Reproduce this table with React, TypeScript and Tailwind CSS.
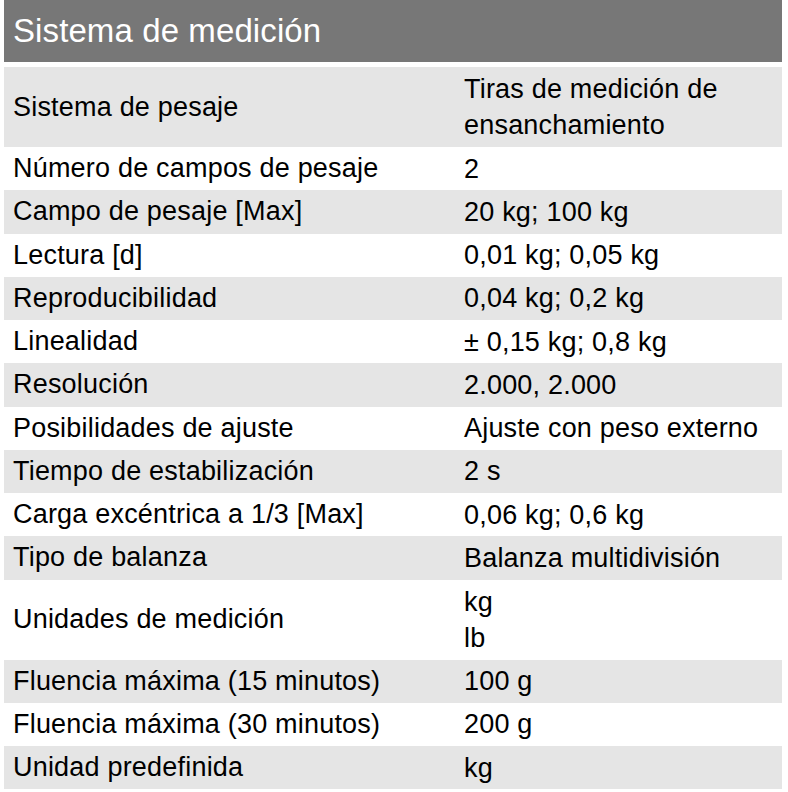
const rows: { label: string; value: string[]; tall?: boolean }[] = [
  { label: "Sistema de pesaje", value: ["Tiras de medición de", "ensanchamiento"], tall: true },
  { label: "Número de campos de pesaje", value: ["2"] },
  { label: "Campo de pesaje [Max]", value: ["20 kg; 100 kg"] },
  { label: "Lectura [d]", value: ["0,01 kg; 0,05 kg"] },
  { label: "Reproducibilidad", value: ["0,04 kg; 0,2 kg"] },
  { label: "Linealidad", value: ["± 0,15 kg; 0,8 kg"] },
  { label: "Resolución", value: ["2.000, 2.000"] },
  { label: "Posibilidades de ajuste", value: ["Ajuste con peso externo"] },
  { label: "Tiempo de estabilización", value: ["2 s"] },
  { label: "Carga excéntrica a 1/3 [Max]", value: ["0,06 kg; 0,6 kg"] },
  { label: "Tipo de balanza", value: ["Balanza multidivisión"] },
  { label: "Unidades de medición", value: ["kg", "lb"], tall: true },
  { label: "Fluencia máxima (15 minutos)", value: ["100 g"] },
  { label: "Fluencia máxima (30 minutos)", value: ["200 g"] },
  { label: "Unidad predefinida", value: ["kg"] },
]

export default function App() {
  return (
    <div
      className="w-[788px] h-[792px] bg-white overflow-hidden"
      style={{ fontFamily: '"Liberation Sans", Arial, sans-serif' }}
    >
      <div className="ml-[4px] mr-[6px] h-[62px] bg-[#777777] flex items-center pl-[9px]">
        <span className="text-white text-[33px] leading-none tracking-[0.1px] pb-[2px]">Sistema de medición</span>
      </div>

      <div className="ml-[4px] mr-[6px] mt-[5px] flex flex-col">
        {rows.map((r, i) => (
          <div
            key={r.label}
            className={
              "flex items-center text-black text-[27px] tracking-[0.2px] " +
              (r.tall ? "h-[80px] " : "h-[43.25px] ") +
              (i % 2 === 0 ? "bg-[#e5e5e5]" : "bg-white")
            }
          >
            <div className="w-[451px] pl-[9px] leading-none">{r.label}</div>
            <div className="flex-1 pl-[9px] flex flex-col leading-[36px]">
              {r.value.map((v) => (
                <span key={v}>{v}</span>
              ))}
            </div>
          </div>
        ))}
      </div>
    </div>
  )
}
